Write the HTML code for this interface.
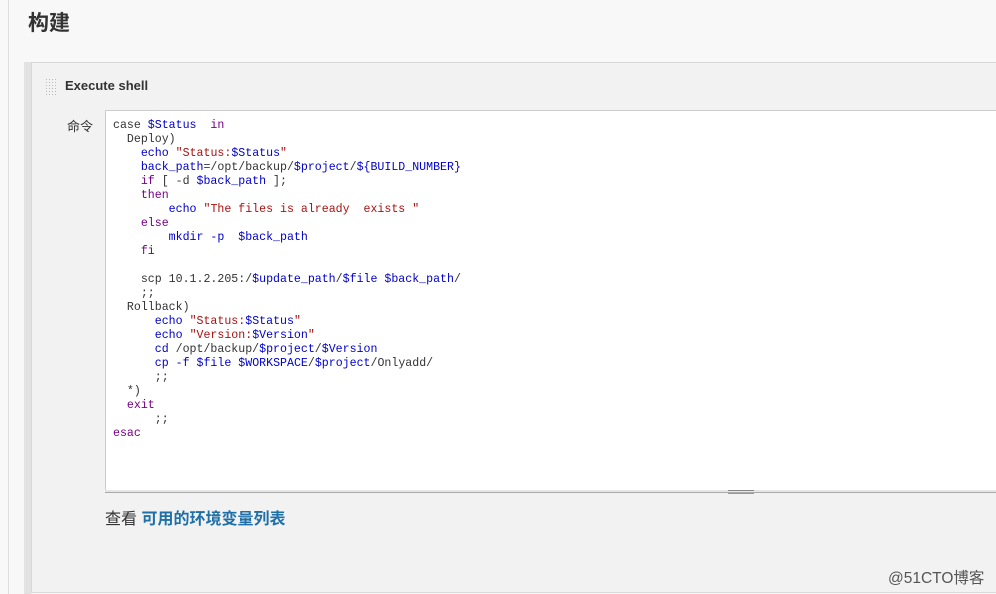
<!DOCTYPE html>
<html><head><meta charset="utf-8"><style>
body{margin:0;width:996px;height:594px;background:#f8f8f8;position:relative;overflow:hidden;font-family:"Liberation Sans","Noto Sans CJK SC",sans-serif;}
.lline{position:absolute;left:8px;top:0;width:1px;height:594px;background:#ddd}
h1{position:absolute;left:28px;top:7px;margin:0;font-size:21px;font-weight:bold;color:#333;font-family:"Liberation Sans","Noto Sans CJK SC",sans-serif}
.bar{position:absolute;left:24px;top:62px;width:7px;height:532px;background:#e2e2e2}
.panel{position:absolute;left:31px;top:62px;width:970px;height:529px;background:#f2f2f2;border:1px solid #d8d8d8}
.grip{position:absolute;left:45px;top:78px;width:12px;height:18px;background-image:radial-gradient(circle,#bbb 0.6px,transparent 0.7px);background-size:3px 3px}
.title{position:absolute;left:65px;top:78px;font-size:13px;font-weight:bold;color:#333}
.lbl{position:absolute;left:67px;top:116px;font-size:13px;color:#333}
.ta{position:absolute;left:105px;top:110px;width:900px;height:379px;background:#fff;border:1px solid #ccc}
pre{margin:0;position:absolute;left:7px;top:8px;font-family:"Liberation Mono","Noto Sans CJK SC",monospace;font-size:11.6px;line-height:14px;color:#333}
.b{color:#00c}.p{color:#708}.r{color:#a11}
.rs{position:absolute;left:105px;top:490px;width:900px;height:2px;background:#e6e6e6;border-bottom:1px solid #aaa}
.rg{position:absolute;left:728px;top:490px;width:26px;height:2px;border-top:1px solid #888;border-bottom:1px solid #999}
.env{position:absolute;left:105px;top:505px;font-size:16px;color:#333}
.env a{color:#1f6fa8;font-weight:bold;text-decoration:none}
.wm{position:absolute;left:888px;top:566px;font-size:15.5px;color:#555}
</style></head><body>
<div class="lline"></div>
<h1>构建</h1>
<div class="bar"></div>
<div class="panel"></div>
<div class="grip"></div>
<div class="title">Execute shell</div>
<div class="lbl">命令</div>
<div class="ta"><pre>case <span class="b">$Status</span>  <span class="p">in</span>
  Deploy)
    <span class="b">echo</span> <span class="r">"Status:<span class="b">$Status</span>"</span>
    <span class="b">back_path</span>=/opt/backup/<span class="b">$project</span>/<span class="b">${BUILD_NUMBER}</span>
    <span class="p">if</span> [ -d <span class="b">$back_path</span> ];
    <span class="p">then</span>
        <span class="b">echo</span> <span class="r">"The files is already  exists "</span>
    <span class="p">else</span>
        <span class="b">mkdir -p</span>  <span class="b">$back_path</span>
    <span class="p">fi</span>

    scp 10.1.2.205:/<span class="b">$update_path</span>/<span class="b">$file</span> <span class="b">$back_path</span>/
    ;;
  Rollback)
      <span class="b">echo</span> <span class="r">"Status:<span class="b">$Status</span>"</span>
      <span class="b">echo</span> <span class="r">"Version:<span class="b">$Version</span>"</span>
      <span class="b">cd</span> /opt/backup/<span class="b">$project</span>/<span class="b">$Version</span>
      <span class="b">cp -f</span> <span class="b">$file</span> <span class="b">$WORKSPACE</span>/<span class="b">$project</span>/Onlyadd/
      ;;
  *)
  <span class="p">exit</span>
      ;;
<span class="p">esac</span></pre></div>
<div class="rs"></div><div class="rg"></div>
<div class="env">查看 <a>可用的环境变量列表</a></div>
<div class="wm">@51CTO博客</div>
</body></html>
